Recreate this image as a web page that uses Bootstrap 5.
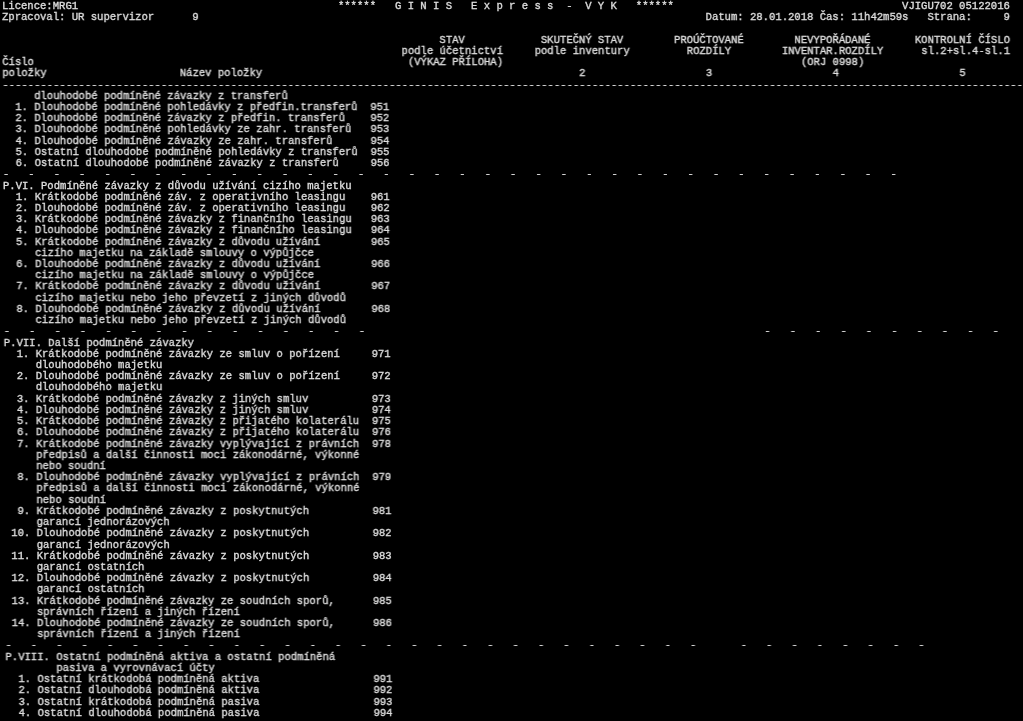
<!DOCTYPE html>
<html lang="cs">
<head>
<meta charset="utf-8">
<title>GINIS Express</title>
<link href="https://cdn.jsdelivr.net/npm/bootstrap@5.3.0/dist/css/bootstrap.min.css" rel="stylesheet">
<style>
html, body { background: #000; height: 100%; overflow: hidden; }
.tisk {
  font-family: "Liberation Mono", "DejaVu Sans Mono", monospace;
  font-size: 10.57px;
  line-height: 11.225px;
  font-weight: 400;
  color: #e0e0e0;
  -webkit-text-stroke: 0.3px #e0e0e0;
  white-space: pre;
  overflow: visible;
  padding: 1px 0 0 2px;
  margin: 0;
  transform-origin: 0 0;
  transform: skewX(0.31deg);
  filter: blur(0.45px);
}
</style>
</head>
<body class="m-0 p-0">
<main class="container-fluid p-0 pt-0">
<pre class="tisk">Licence:MRG1                                         ******   G I N I S   E x p r e s s  -  V Y K   ******                                    VJIGU702 05122016
Zpracoval: UR supervizor      9                                                                                Datum: 28.01.2018 Čas: 11h42m59s   Strana:     9

                                                                     STAV            SKUTEČNÝ STAV        PROÚČTOVANÉ        NEVYPOŘÁDANÉ       KONTROLNÍ ČÍSLO
                                                               podle účetnictví     podle inventury         ROZDÍLY        INVENTAR.ROZDÍLY      sl.2+sl.4-sl.1
Číslo                                                           (VÝKAZ PŘÍLOHA)                                               (ORJ 0998)
položky                     Název položky                                                  2                   3                   4                   5
-----------------------------------------------------------------------------------------------------------------------------------------------------------------
     dlouhodobé podmíněné závazky z transferů
  1. Dlouhodobé podmíněné pohledávky z předfin.transferů  951
  2. Dlouhodobé podmíněné závazky z předfin. transferů    952
  3. Dlouhodobé podmíněné pohledávky ze zahr. transferů   953
  4. Dlouhodobé podmíněné závazky ze zahr. transferů      954
  5. Ostatní dlouhodobé podmíněné pohledávky z transferů  955
  6. Ostatní dlouhodobé podmíněné závazky z transferů     956
-   -   -   -   -   -   -   -   -   -   -   -   -   -   -   -   -   -   -   -   -   -   -   -   -   -   -   -   -   -   -   -   -   -   -   -
P.VI. Podmíněné závazky z důvodu užívání cizího majetku
  1. Krátkodobé podmíněné záv. z operativního leasingu    961
  2. Dlouhodobé podmíněné záv. z operativního leasingu    962
  3. Krátkodobé podmíněné závazky z finančního leasingu   963
  4. Dlouhodobé podmíněné závazky z finančního leasingu   964
  5. Krátkodobé podmíněné závazky z důvodu užívání        965
     cizího majetku na základě smlouvy o výpůjčce
  6. Dlouhodobé podmíněné závazky z důvodu užívání        966
     cizího majetku na základě smlouvy o výpůjčce
  7. Krátkodobé podmíněné závazky z důvodu užívání        967
     cizího majetku nebo jeho převzetí z jiných důvodů
  8. Dlouhodobé podmíněné závazky z důvodu užívání        968
     cizího majetku nebo jeho převzetí z jiných důvodů
-   -   -   -   -   -   -   -   -   -   -   -   -   -   -                                                               -   -   -   -   -   -   -   -   -   -
P.VII. Další podmíněné závazky
  1. Krátkodobé podmíněné závazky ze smluv o pořízení     971
     dlouhodobého majetku
  2. Dlouhodobé podmíněné závazky ze smluv o pořízení     972
     dlouhodobého majetku
  3. Krátkodobé podmíněné závazky z jiných smluv          973
  4. Dlouhodobé podmíněné závazky z jiných smluv          974
  5. Krátkodobé podmíněné závazky z přijatého kolaterálu  975
  6. Dlouhodobé podmíněné závazky z přijatého kolaterálu  976
  7. Krátkodobé podmíněné závazky vyplývající z právních  978
     předpisů a další činnosti moci zákonodárné, výkonné
     nebo soudní
  8. Dlouhodobé podmíněné závazky vyplývající z právních  979
     předpisů a další činnosti moci zákonodárné, výkonné
     nebo soudní
  9. Krátkodobé podmíněné závazky z poskytnutých          981
     garancí jednorázových
 10. Dlouhodobé podmíněné závazky z poskytnutých          982
     garancí jednorázových
 11. Krátkodobé podmíněné závazky z poskytnutých          983
     garancí ostatních
 12. Dlouhodobé podmíněné závazky z poskytnutých          984
     garancí ostatních
 13. Krátkodobé podmíněné závazky ze soudních sporů,      985
     správních řízení a jiných řízení
 14. Dlouhodobé podmíněné závazky ze soudních sporů,      986
     správních řízení a jiných řízení
-   -   -   -   -   -   -   -   -   -   -   -   -   -   -   -   -   -   -   -   -   -   -   -   -   -   -   -       -   -   -   -   -   -   -   -
P.VIII. Ostatní podmíněná aktiva a ostatní podmíněná
        pasiva a vyrovnávací účty
  1. Ostatní krátkodobá podmíněná aktiva                  991
  2. Ostatní dlouhodobá podmíněná aktiva                  992
  3. Ostatní krátkodobá podmíněná pasiva                  993
  4. Ostatní dlouhodobá podmíněná pasiva                  994</pre>
</main>
</body>
</html>
